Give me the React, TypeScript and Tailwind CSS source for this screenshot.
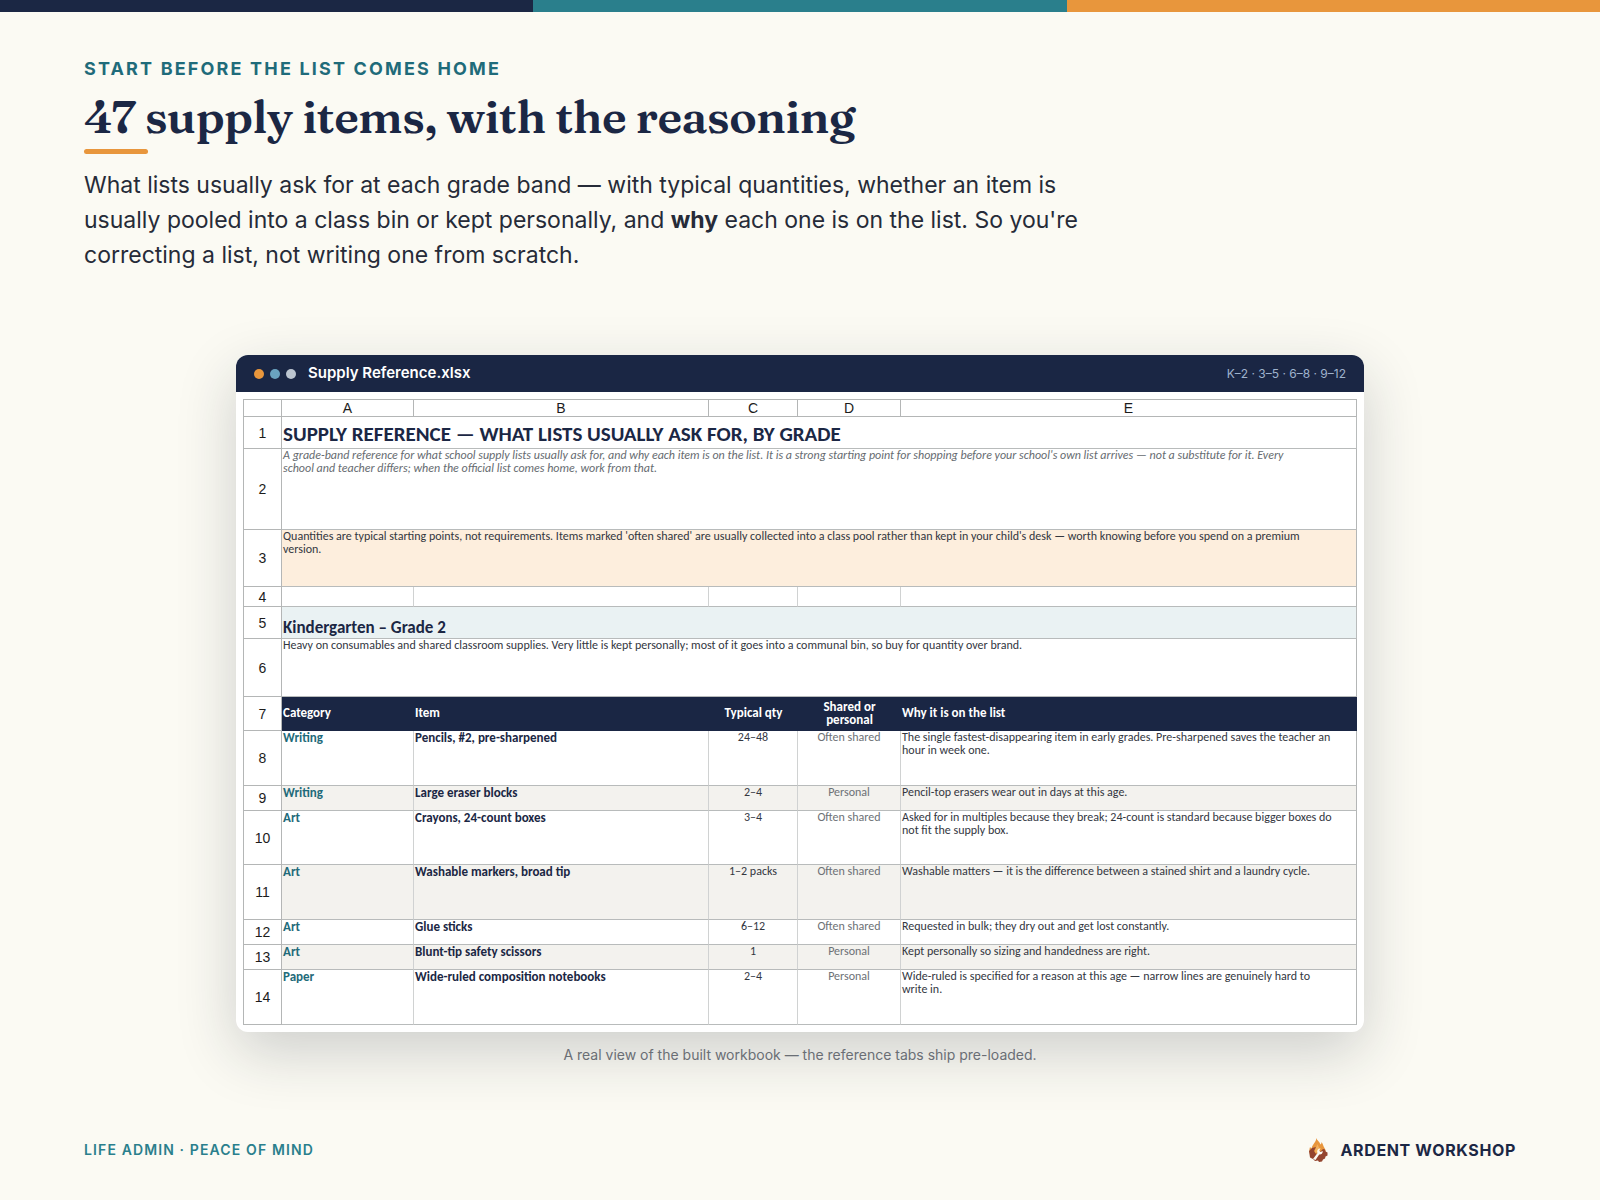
import { clsx } from "clsx"

const supplies = [
  { row: 8, height: "h-[55px]", category: "Writing", item: "Pencils, #2, pre-sharpened", qty: "24–48", kept: "Often shared", why: ["The single fastest-disappearing item in early grades. Pre-sharpened saves the teacher an", "hour in week one."] },
  { row: 9, height: "h-[25px]", category: "Writing", item: "Large eraser blocks", qty: "2–4", kept: "Personal", why: ["Pencil-top erasers wear out in days at this age."] },
  { row: 10, height: "h-[54px]", category: "Art", item: "Crayons, 24-count boxes", qty: "3–4", kept: "Often shared", why: ["Asked for in multiples because they break; 24-count is standard because bigger boxes do", "not fit the supply box."] },
  { row: 11, height: "h-[55px]", category: "Art", item: "Washable markers, broad tip", qty: "1–2 packs", kept: "Often shared", why: ["Washable matters — it is the difference between a stained shirt and a laundry cycle."] },
  { row: 12, height: "h-[25px]", category: "Art", item: "Glue sticks", qty: "6–12", kept: "Often shared", why: ["Requested in bulk; they dry out and get lost constantly."] },
  { row: 13, height: "h-[25px]", category: "Art", item: "Blunt-tip safety scissors", qty: "1", kept: "Personal", why: ["Kept personally so sizing and handedness are right."] },
  { row: 14, height: "h-[55px]", category: "Paper", item: "Wide-ruled composition notebooks", qty: "2–4", kept: "Personal", why: ["Wide-ruled is specified for a reason at this age — narrow lines are genuinely hard to", "write in."] },
]

const cell = "border-r border-b border-r-[#d0d2d2] border-b-[#b8bbbb] px-[1px] align-top last:border-r-[#b4b6b6]"

function RowNumber({ n }: { n: number }) {
  return (
    <th
      scope="row"
      className="border-r border-b border-[#b4b6b6] bg-white p-0 text-center align-middle font-['Liberation_Sans',Arial,sans-serif] text-sm leading-4 font-normal text-[#1c1c1c]"
    >
      {n}
    </th>
  )
}

function Sheet() {
  return (
    <table className="w-full table-fixed border-separate border-spacing-0 border-t border-l border-[#b4b6b6] text-left font-['Carlito','Lato',sans-serif] text-xs leading-[13px] text-[#33373f]">
      <colgroup>
        <col className="w-[38px]" />
        <col className="w-[132px]" />
        <col className="w-[295px]" />
        <col className="w-[89px]" />
        <col className="w-[103px]" />
        <col />
      </colgroup>
      <thead>
        <tr className="h-[17px] font-['Liberation_Sans',Arial,sans-serif] text-sm leading-4 text-[#1c1c1c]">
          <td className="border-r border-b border-[#b4b6b6] p-0" />
          {["A", "B", "C", "D", "E"].map((letter) => (
            <th key={letter} scope="col" className="border-r border-b border-[#b4b6b6] p-0 text-center font-normal">
              {letter}
            </th>
          ))}
        </tr>
      </thead>
      <tbody>
        <tr className="h-8">
          <RowNumber n={1} />
          <td colSpan={5} className="border-r border-b border-[#b8bbbb] px-[1px] pb-[2px] align-bottom text-[21px] leading-6 font-bold text-[#1b2744]">
            SUPPLY REFERENCE — WHAT LISTS USUALLY ASK FOR, BY GRADE
          </td>
        </tr>
        <tr className="h-[81px]">
          <RowNumber n={2} />
          <td colSpan={5} className={clsx(cell, "text-[#666b70] italic")}>
            A grade-band reference for what school supply lists usually ask for, and why each item is on the list. It is a strong starting point for shopping before your school's own list arrives — not a substitute for it. Every
            <br />
            school and teacher differs; when the official list comes home, work from that.
          </td>
        </tr>
        <tr className="h-[57px]">
          <RowNumber n={3} />
          <td colSpan={5} className={clsx(cell, "bg-[#fdeedd]")}>
            Quantities are typical starting points, not requirements. Items marked 'often shared' are usually collected into a class pool rather than kept in your child's desk — worth knowing before you spend on a premium
            <br />
            version.
          </td>
        </tr>
        <tr className="h-5">
          <RowNumber n={4} />
          <td className={cell} />
          <td className={cell} />
          <td className={cell} />
          <td className={cell} />
          <td className={cell} />
        </tr>
        <tr className="h-8">
          <RowNumber n={5} />
          <td colSpan={5} className="border-r border-b border-[#b8bbbb] bg-[#eaf2f3] px-[1px] pb-0 align-bottom text-[17px] leading-5 font-bold text-[#1b2744]">
            Kindergarten – Grade 2
          </td>
        </tr>
        <tr className="h-[58px]">
          <RowNumber n={6} />
          <td colSpan={5} className={cell}>
            Heavy on consumables and shared classroom supplies. Very little is kept personally; most of it goes into a communal bin, so buy for quantity over brand.
          </td>
        </tr>
        <tr className="h-[34px] bg-[#1a2644] text-[13px] leading-[13px] text-white">
          <RowNumber n={7} />
          <th scope="col" className="px-[1px] pb-[3px]">Category</th>
          <th scope="col" className="px-[1px] pb-[3px]">Item</th>
          <th scope="col" className="px-[1px] pb-[3px] text-center">Typical qty</th>
          <th scope="col" className="px-[1px] pb-[3px] text-center">
            Shared or
            <br />
            personal
          </th>
          <th scope="col" className="px-[1px] pb-[3px]">Why it is on the list</th>
        </tr>
        {supplies.map((supply, index) => (
          <tr key={supply.row} className={clsx(supply.height, index % 2 === 1 && "bg-[#f3f2ee]")}>
            <RowNumber n={supply.row} />
            <td className={clsx(cell, "text-[13px] leading-[13px] font-bold text-[#1f6b7a]")}>{supply.category}</td>
            <td className={clsx(cell, "text-[13px] leading-[13px] font-bold text-[#1b2744]")}>{supply.item}</td>
            <td className={clsx(cell, "text-center")}>{supply.qty}</td>
            <td className={clsx(cell, "text-center text-[#6d7176]")}>{supply.kept}</td>
            <td className={cell}>
              {supply.why.map((line) => (
                <p key={line}>{line}</p>
              ))}
            </td>
          </tr>
        ))}
      </tbody>
    </table>
  )
}

function FlameMark() {
  return (
    <svg viewBox="0 0 20 26" className="h-[26px] w-5" aria-hidden="true">
      <path d="M8.500 1c.3 2.500 3 3.600 4 6.500 .8-.5 1-1.500 1-2.500 2 2.500 1.500 4 3 6 1.500 2 1.500 5 .5 7L10 22 3 19C1 16 1 13 2 10c.8.8 1 1.500 1.500 2C4 7.500 8 5.500 8.500 1z" fill="#e8963c" />
      <path d="M9 7c2 2.500 3 5 2 8l-4 1c-1.500-3 2-5 2-9z" fill="#f3b25e" />
      <path d="M1 14l3-3 4-1-2 4 2 3 5-3 2-2 2 .5.500 2 2 1v3l-2 1-.5 2-2 1-1 2-3 .5-1-1.500-3 .5-2-2-3-1.500z" fill="#94452f" />
      <path d="M5 22l4.500-6c-1-2.500.500-4.600 3-4.800l-1.300 2.500 1.300 1.300 2.300-1c0 2.600-1.800 3.900-3.600 3.500L7.500 23z" fill="#fbfaf3" />
    </svg>
  )
}

export default function App() {
  return (
    <div className="flex min-h-screen flex-col bg-[#fbfaf3] font-['Inter',sans-serif] text-[#262b38]">
      <div className="grid h-3 grid-cols-3">
        <span className="bg-[#1b2744]" />
        <span className="bg-[#2a7f8c]" />
        <span className="bg-[#e8963c]" />
      </div>

      <header className="px-[84px] pt-[45px]">
        <p className="text-lg leading-6 font-bold tracking-[0.12em] text-[#1f6b7a]">START BEFORE THE LIST COMES HOME</p>
        <h1 className="mt-2 font-['Fraunces','Liberation_Serif',serif] text-[46px] leading-[56px] font-semibold tracking-[-0.01em] text-[#1b2744]">
          47 supply items, with the reasoning
        </h1>
        <div className="mt-1 h-[5px] w-16 rounded-full bg-[#e8963c]" />
        <p className="mt-[14px] max-w-[1010px] text-[23px] leading-[35px]">
          What lists usually ask for at each grade band — with typical quantities, whether an item is usually pooled into a class bin or kept personally, and <strong>why</strong> each one is on the list. So you're correcting a list, not writing one from scratch.
        </p>
      </header>

      <main className="flex flex-1 flex-col items-center px-[84px] pt-[82px] pb-8">
        <figure className="w-full max-w-[1128px]">
          <div className="overflow-hidden rounded-xl bg-white shadow-[0_20px_60px_rgba(27,33,50,0.2)]">
            <div className="flex h-[37px] items-center bg-[#1a2644] px-[18px]">
              <div className="flex gap-1.5">
                <span className="size-2.5 rounded-full bg-[#e8963c]" />
                <span className="size-2.5 rounded-full bg-[#6aa3c0]" />
                <span className="size-2.5 rounded-full bg-[#bcc5d0]" />
              </div>
              <h2 className="ml-3 text-[15px] font-semibold text-white">Supply Reference.xlsx</h2>
              <span className="ml-auto text-xs text-[#9fb2cc]">K–2 · 3–5 · 6–8 · 9–12</span>
            </div>
            <div className="p-[7px]">
              <Sheet />
            </div>
          </div>
          <figcaption className="mt-[11px] text-center text-sm leading-6 text-[#6a6e75]">
            A real view of the built workbook — the reference tabs ship pre-loaded.
          </figcaption>
        </figure>
      </main>

      <footer className="flex items-center justify-between px-[84px] pb-[37px]">
        <span className="text-sm font-semibold tracking-[0.08em] text-[#2a7f8c]">LIFE ADMIN · PEACE OF MIND</span>
        <span className="flex items-center gap-3 font-bold tracking-[0.04em] text-[#1b2744]">
          <FlameMark />
          ARDENT WORKSHOP
        </span>
      </footer>
    </div>
  )
}
